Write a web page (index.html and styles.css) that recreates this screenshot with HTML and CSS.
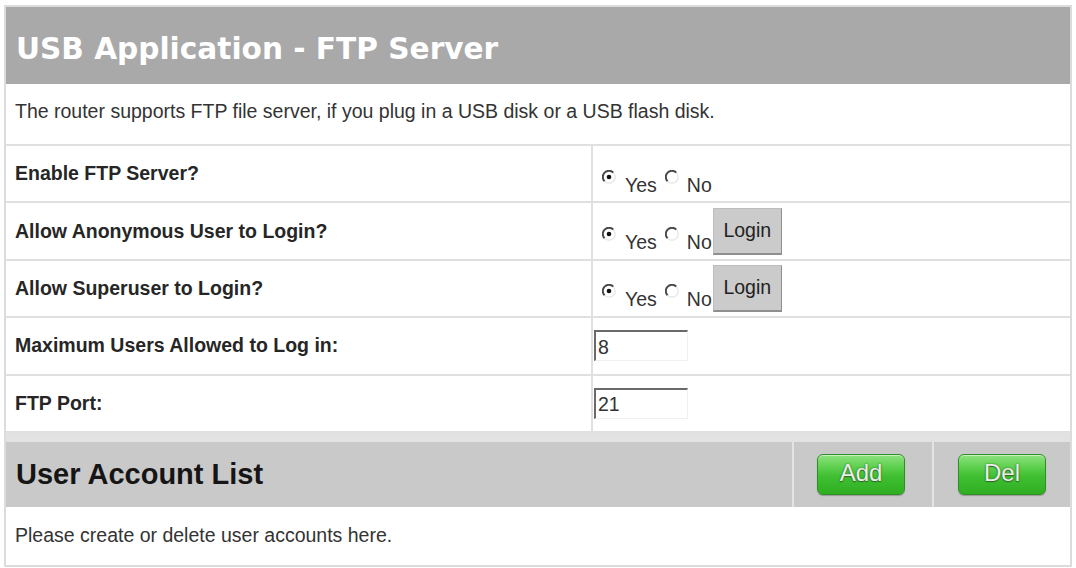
FILE: index.html
```html
<!DOCTYPE html>
<html lang="en">
<head>
<meta charset="utf-8">
<title>USB Application - FTP Server</title>
<link rel="stylesheet" href="styles.css">
</head>
<body>
<div class="panel">
  <div class="title">USB Application - FTP Server</div>
  <div class="desc">The router supports FTP file server, if you plug in a USB disk or a USB flash disk.</div>
  <div class="form">
    <div class="label">Enable FTP Server?</div>
    <div class="value">
      <span class="radio"><svg viewBox="0 0 14 14" width="14" height="14"><path d="M2.6 11.4 A6.2 6.2 0 0 1 11.4 2.6" fill="none" stroke="#4a4a4a" stroke-width="2"/><path d="M11.4 2.6 A6.2 6.2 0 0 1 2.6 11.4" fill="none" stroke="#e4e4e4" stroke-width="1.2"/><circle cx="7" cy="7" r="2.3" fill="#111"/></svg></span>
      <span class="opt">Yes</span>
      <span class="radio"><svg viewBox="0 0 14 14" width="14" height="14"><path d="M2.6 11.4 A6.2 6.2 0 0 1 11.4 2.6" fill="none" stroke="#4a4a4a" stroke-width="2"/><path d="M11.4 2.6 A6.2 6.2 0 0 1 2.6 11.4" fill="none" stroke="#e4e4e4" stroke-width="1.2"/></svg></span>
      <span class="opt no">No</span>
    </div>
    <div class="label">Allow Anonymous User to Login?</div>
    <div class="value">
      <span class="radio"><svg viewBox="0 0 14 14" width="14" height="14"><path d="M2.6 11.4 A6.2 6.2 0 0 1 11.4 2.6" fill="none" stroke="#4a4a4a" stroke-width="2"/><path d="M11.4 2.6 A6.2 6.2 0 0 1 2.6 11.4" fill="none" stroke="#e4e4e4" stroke-width="1.2"/><circle cx="7" cy="7" r="2.3" fill="#111"/></svg></span>
      <span class="opt">Yes</span>
      <span class="radio"><svg viewBox="0 0 14 14" width="14" height="14"><path d="M2.6 11.4 A6.2 6.2 0 0 1 11.4 2.6" fill="none" stroke="#4a4a4a" stroke-width="2"/><path d="M11.4 2.6 A6.2 6.2 0 0 1 2.6 11.4" fill="none" stroke="#e4e4e4" stroke-width="1.2"/></svg></span>
      <span class="opt no">No</span>
      <button class="login" type="button">Login</button>
    </div>
    <div class="label">Allow Superuser to Login?</div>
    <div class="value">
      <span class="radio"><svg viewBox="0 0 14 14" width="14" height="14"><path d="M2.6 11.4 A6.2 6.2 0 0 1 11.4 2.6" fill="none" stroke="#4a4a4a" stroke-width="2"/><path d="M11.4 2.6 A6.2 6.2 0 0 1 2.6 11.4" fill="none" stroke="#e4e4e4" stroke-width="1.2"/><circle cx="7" cy="7" r="2.3" fill="#111"/></svg></span>
      <span class="opt">Yes</span>
      <span class="radio"><svg viewBox="0 0 14 14" width="14" height="14"><path d="M2.6 11.4 A6.2 6.2 0 0 1 11.4 2.6" fill="none" stroke="#4a4a4a" stroke-width="2"/><path d="M11.4 2.6 A6.2 6.2 0 0 1 2.6 11.4" fill="none" stroke="#e4e4e4" stroke-width="1.2"/></svg></span>
      <span class="opt no">No</span>
      <button class="login" type="button">Login</button>
    </div>
    <div class="label">Maximum Users Allowed to Log in:</div>
    <div class="value value-input"><input class="field" type="text" value="8" readonly></div>
    <div class="label">FTP Port:</div>
    <div class="value value-input"><input class="field" type="text" value="21" readonly></div>
  </div>
  <div class="listbar">
    <div class="listtitle">User Account List</div>
    <div class="listcell"><button class="gbtn" type="button">Add</button></div>
    <div class="listcell last"><button class="gbtn" type="button">Del</button></div>
  </div>
  <div class="note">Please create or delete user accounts here.</div>
</div>
</body>
</html>
```

FILE: styles.css
```css
html, body {
  margin: 0;
  padding: 0;
  background: #ffffff;
}

body {
  font-family: "Liberation Sans", Arial, sans-serif;
  color: #222;
}

.panel {
  box-sizing: border-box;
  width: 1068px;
  margin: 5px 0 0 4px;
  border: 2px solid #dcdcdc;
  background: #fff;
}

.title {
  box-sizing: border-box;
  height: 77px;
  padding: 6px 0 0 10px;
  display: flex;
  align-items: center;
  background: #a9a9a9;
  color: #ffffff;
  font-family: "DejaVu Sans", Verdana, sans-serif;
  font-size: 29.6px;
  font-weight: bold;
}

.desc {
  box-sizing: border-box;
  height: 62px;
  padding: 0 0 6px 9px;
  display: flex;
  align-items: center;
  border-bottom: 2px solid #e0e0e0;
  font-size: 19.5px;
  color: #333;
}

.form {
  display: grid;
  grid-template-columns: 587px 1fr;
  grid-auto-rows: 57.4px;
}

.label {
  box-sizing: border-box;
  display: flex;
  align-items: center;
  padding-left: 9px;
  border-bottom: 2px solid #e0e0e0;
  border-right: 2px solid #e0e0e0;
  font-size: 19.5px;
  font-weight: bold;
  color: #262626;
}

.value {
  box-sizing: border-box;
  display: flex;
  align-items: center;
  padding-left: 9px;
  border-bottom: 2px solid #e0e0e0;
  font-size: 19.5px;
  color: #333;
}

.value-input {
  padding-left: 1px;
}

.radio {
  display: flex;
  width: 14px;
  height: 14px;
  margin-top: 6px;
}

.opt {
  padding-top: 22px;
  line-height: 22px;
  margin: 0 8px 0 9px;
}

.opt.no {
  margin: 0 1px 0 8px;
}

.login {
  box-sizing: border-box;
  width: 69px;
  height: 47px;
  padding: 0;
  border: 1px solid #bdbdbd;
  border-right-color: #8f8f8f;
  border-bottom: 2px solid #8f8f8f;
  background: #cbcbcb;
  font-family: "Liberation Sans", Arial, sans-serif;
  font-size: 19.5px;
  color: #222;
}

.field {
  box-sizing: border-box;
  width: 94px;
  height: 31px;
  padding: 2px 0 0 2px;
  border-style: solid;
  border-width: 2px 1px 1px 2px;
  border-color: #6a6a6a #f0f0f0 #f0f0f0 #6a6a6a;
  background: #fff;
  font-family: "Liberation Sans", Arial, sans-serif;
  font-size: 19.5px;
  color: #333;
  outline: none;
}

.listbar {
  display: grid;
  grid-template-columns: 786px 140px 1fr;
  height: 74px;
  box-sizing: border-box;
  border-top: 9px solid #e2e2e2;
  background: #c9c9c9;
}

.listtitle {
  display: flex;
  align-items: center;
  padding-left: 10px;
  font-size: 29px;
  font-weight: bold;
  color: #151515;
}

.listcell {
  display: flex;
  align-items: center;
  justify-content: center;
  border-left: 2px solid #e4e4e4;
  padding-right: 4px;
}

.listcell.last {
  padding-right: 0;
}

.gbtn {
  box-sizing: border-box;
  width: 88px;
  height: 41px;
  padding: 0 0 3px 0;
  border: 1px solid #2f8f26;
  border-radius: 6px;
  background: linear-gradient(to bottom, #8ee27f 0%, #5fd04f 30%, #3fbf31 55%, #2fae22 100%);
  box-shadow: inset 0 1px 0 rgba(255,255,255,0.5), 0 1px 1px rgba(0,0,0,0.25);
  font-family: "Liberation Sans", Arial, sans-serif;
  font-size: 24px;
  color: #ececec;
  text-shadow: 0 0 2px #2c6a24, 0 1px 1px #2c6a24;
}

.note {
  box-sizing: border-box;
  height: 58px;
  display: flex;
  align-items: center;
  padding-left: 9px;
  font-size: 19.5px;
  color: #333;
}
```
